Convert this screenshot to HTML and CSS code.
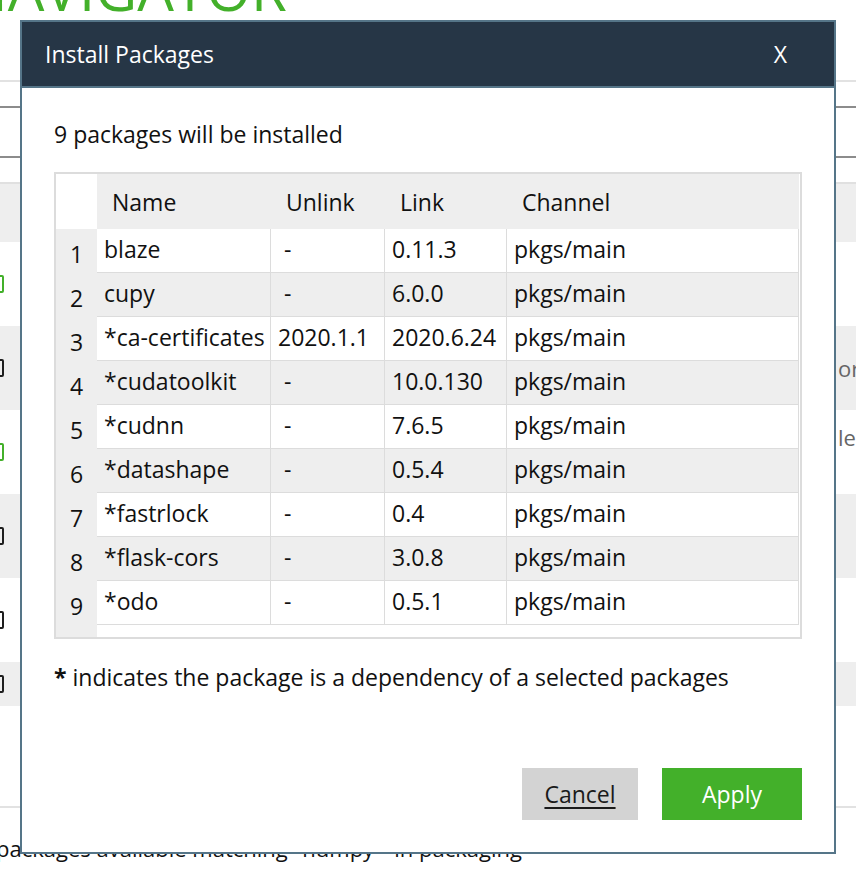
FILE: index.html
```html
<!DOCTYPE html>
<html lang="en">
<head>
<meta charset="utf-8">
<title>Install Packages</title>
<link rel="stylesheet" href="styles.css">
</head>
<body>
<div class="page">
  <header class="topbar"><div class="brand">NAVIGATOR</div></header>
  <div class="rule-light"></div>
  <div class="tabs"></div>
  <div class="rule-dark"></div>
  <div class="search"></div>
  <div class="rule-dark"></div>
  <div class="spacer"></div>
  <div class="list-head"></div>
  <div class="pkg-row"><span class="check on"></span><span class="desc"></span></div>
  <div class="pkg-row alt"><span class="check"></span><span class="desc">or numerical computing</span></div>
  <div class="pkg-row"><span class="check on"></span><span class="desc two">le processing<br>&nbsp;</span></div>
  <div class="pkg-row alt"><span class="check"></span><span class="desc"></span></div>
  <div class="pkg-row"><span class="check"></span><span class="desc"></span></div>
  <div class="pkg-row alt short"><span class="check"></span><span class="desc"></span></div>
  <div class="list-end"></div>
  <div class="rule-bottom"></div>
  <div class="status">packages available matching "numpy"&nbsp;&nbsp;in packaging</div>
</div>

<div class="dialog">
  <div class="dlg-head">
    <span class="dlg-title">Install Packages</span>
    <span class="dlg-close">X</span>
  </div>
  <div class="dlg-body">
    <div class="summary">9 packages will be installed</div>
    <div class="pkg-table">
      <div class="th corner"></div>
      <div class="th">Name</div>
      <div class="th">Unlink</div>
      <div class="th">Link</div>
      <div class="th">Channel</div>
      <div class="th fill"></div>

      <div class="rn">1</div>
      <div class="td">blaze</div><div class="td">&nbsp;-</div><div class="td">0.11.3</div><div class="td">pkgs/main</div><div class="fill"></div>

      <div class="rn">2</div>
      <div class="td even">cupy</div><div class="td even">&nbsp;-</div><div class="td even">6.0.0</div><div class="td even">pkgs/main</div><div class="fill"></div>

      <div class="rn">3</div>
      <div class="td">*ca-certificates</div><div class="td">2020.1.1</div><div class="td">2020.6.24</div><div class="td">pkgs/main</div><div class="fill"></div>

      <div class="rn">4</div>
      <div class="td even">*cudatoolkit</div><div class="td even">&nbsp;-</div><div class="td even">10.0.130</div><div class="td even">pkgs/main</div><div class="fill"></div>

      <div class="rn">5</div>
      <div class="td">*cudnn</div><div class="td">&nbsp;-</div><div class="td">7.6.5</div><div class="td">pkgs/main</div><div class="fill"></div>

      <div class="rn">6</div>
      <div class="td even">*datashape</div><div class="td even">&nbsp;-</div><div class="td even">0.5.4</div><div class="td even">pkgs/main</div><div class="fill"></div>

      <div class="rn">7</div>
      <div class="td">*fastrlock</div><div class="td">&nbsp;-</div><div class="td">0.4</div><div class="td">pkgs/main</div><div class="fill"></div>

      <div class="rn">8</div>
      <div class="td even">*flask-cors</div><div class="td even">&nbsp;-</div><div class="td even">3.0.8</div><div class="td even">pkgs/main</div><div class="fill"></div>

      <div class="rn">9</div>
      <div class="td">*odo</div><div class="td">&nbsp;-</div><div class="td">0.5.1</div><div class="td">pkgs/main</div><div class="fill"></div>

      <div class="rn-end"></div>
      <div class="td-end"></div>
    </div>
    <div class="note"><b>*</b> indicates the package is a dependency of a selected packages</div>
    <div class="actions">
      <button class="btn btn-cancel">Cancel</button>
      <button class="btn btn-apply">Apply</button>
    </div>
  </div>
</div>
</body>
</html>
```

FILE: styles.css
```css
* { box-sizing: border-box; }

html, body {
  margin: 0;
  padding: 0;
  overflow: hidden;
  background: #fff;
}

body {
  width: 856px;
  height: 874px;
  position: relative;
  font-family: "Open Sans", "Noto Sans", sans-serif;
  font-size: 23px;
  line-height: 30px;
  color: #111;
}

/* ---------- background page ---------- */
.page { width: 856px; }

.topbar {
  height: 80px;
  display: flex;
  align-items: flex-start;
}

.brand {
  font-size: 58px;
  line-height: 58px;
  font-weight: 400;
  color: #43b02a;
  margin-top: -40px;
  margin-left: -36px;
  white-space: nowrap;
}

.rule-light { height: 2px; background: #e2e2e2; }
.rule-dark { height: 2px; background: #8c8c8c; }
.tabs { height: 24px; }
.search { height: 48px; }
.spacer { height: 24px; }

.list-head {
  height: 60px;
  background: #eee;
  border-top: 2px solid #e0e0e0;
}

.pkg-row {
  height: 84px;
  display: grid;
  grid-template-columns: 838px 1fr;
  align-items: center;
}
.pkg-row.alt { background: #eee; }
.pkg-row.short { height: 44px; }

.check {
  width: 18px;
  height: 18px;
  border: 2px solid #1e1e1e;
  border-radius: 2px;
  margin-left: -14px;
}
.check.on { border-color: #43b02a; }

.desc {
  color: #666;
  font-size: 22px;
  white-space: nowrap;
}

.list-end { height: 100px; }
.rule-bottom { height: 2px; background: #e2e2e2; }

.status {
  margin-top: 25px;
  margin-left: -4px;
  font-size: 22px;
  white-space: nowrap;
}

/* ---------- dialog ---------- */
.dialog {
  position: absolute;
  left: 20px;
  top: 20px;
  width: 816px;
  height: 834px;
  border: 2px solid #557588;
  background: #fff;
  display: flex;
  flex-direction: column;
}

.dlg-head {
  height: 66px;
  flex: none;
  background: #263646;
  border-bottom: 2px solid #557588;
  display: flex;
  align-items: center;
  justify-content: space-between;
  padding: 0 47px 0 23px;
  color: #fff;
}

.dlg-body {
  flex: 1;
  display: flex;
  flex-direction: column;
  padding: 31px 32px 32px;
}

.summary { white-space: nowrap; }

.pkg-table {
  margin-top: 23px;
  border: 2px solid #dcdcdc;
  display: grid;
  grid-template-columns: 41px 174px 114px 122px 292px 1px;
}

.th {
  height: 55px;
  background: #eee;
  display: flex;
  align-items: center;
  padding: 0 0 0 15px;
  white-space: nowrap;
}
.th.corner { background: #fff; padding: 0; }
.th.fill { padding: 0; }

.rn {
  height: 44px;
  background: #eee;
  display: flex;
  justify-content: center;
  align-items: center;
  padding-top: 5px;
}

.td {
  height: 44px;
  background: #fff;
  border-right: 1px solid #dcdcdc;
  border-bottom: 1px solid #dcdcdc;
  padding: 5px 0 0 7px;
  white-space: nowrap;
  overflow: hidden;
}
.td.even { background: #eee; }

.fill { height: 44px; background: #fff; }

.rn-end { height: 12px; background: #eee; }
.td-end { height: 12px; grid-column: span 5; background: #fff; }

.note {
  margin-top: 23px;
  white-space: nowrap;
}
.note b { font-weight: 700; }

.actions {
  margin-top: auto;
  display: flex;
  justify-content: flex-end;
  gap: 24px;
}

.btn {
  height: 52px;
  border: none;
  border-radius: 0;
  font-family: inherit;
  font-size: 23px;
  line-height: 30px;
  padding: 0;
  cursor: pointer;
}

.btn-cancel {
  width: 116px;
  background: #d3d3d3;
  color: #1a1a1a;
  text-decoration: underline;
  text-decoration-thickness: 2px;
  text-underline-offset: 4px;
}

.btn-apply {
  width: 140px;
  background: #43b02a;
  color: #fff;
}
```
